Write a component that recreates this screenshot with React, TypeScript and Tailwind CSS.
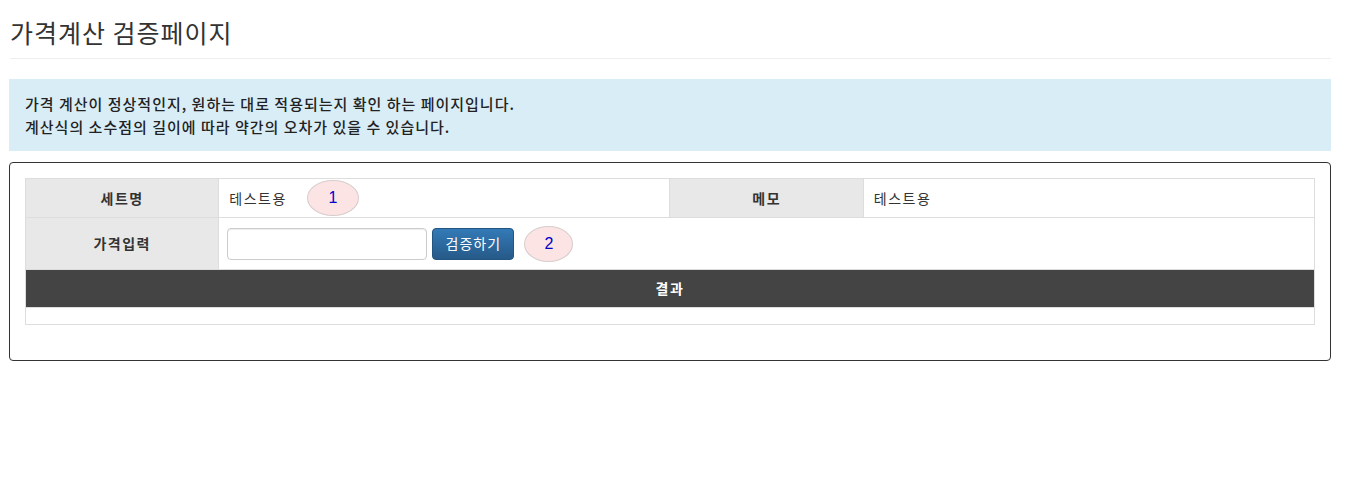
import React from 'react';

const Mark: React.FC<{ n: string; className?: string }> = ({ n, className }) => (
    <span
        className={
            'flex items-center justify-center h-[36px] -my-[10px] rounded-[50%] bg-[#fde4e4] border border-[#d6cccc] text-[#0000cc] text-[16px] tracking-normal font-["Liberation_Sans",Arial,sans-serif] ' +
            (className ?? '')
        }
    >
        {n}
    </span>
);

export default function App() {
    return (
        <div className="pl-[9px] pr-[15px] bg-white text-[#333] text-[14px] font-['Noto_Sans_CJK_KR','Noto_Sans',sans-serif]">
            <div className="pt-[17px] pb-[10px] border-b border-[#eee] ml-[1px]">
                <h1 className="text-[25px] leading-[31px] font-normal tracking-[1px]">가격계산 검증페이지</h1>
            </div>

            <div className="mt-[20px] bg-[#d9edf7] pl-[16px] pr-4 pt-[13px] pb-[13px] text-[15px] leading-[23px] font-medium tracking-[1px] text-[#222]">
                <div>가격 계산이 정상적인지, 원하는 대로 적용되는지 확인 하는 페이지입니다.</div>
                <div>계산식의 소수점의 길이에 따라 약간의 오차가 있을 수 있습니다.</div>
            </div>

            <div className="mt-[11px] border border-[#333] rounded-[4px] px-[15px] pt-[15px] pb-[35px]">
                <table className="w-full table-fixed border-collapse border border-[#ddd] tracking-[1.5px]">
                    <colgroup>
                        <col className="w-[15%]" />
                        <col className="w-[35%]" />
                        <col className="w-[15%]" />
                        <col className="w-[35%]" />
                    </colgroup>
                    <tbody>
                        <tr className="h-[39px]">
                            <th className="border border-[#ddd] bg-[#e8e8e8] font-bold text-center">세트명</th>
                            <td className="border border-[#ddd] px-[10px]">
                                <div className="flex items-center">
                                    <span>테스트용</span>
                                    <Mark n="1" className="ml-[20px] w-[52px]" />
                                </div>
                            </td>
                            <th className="border border-[#ddd] bg-[#e8e8e8] font-bold text-center">메모</th>
                            <td className="border border-[#ddd] px-[10px]">테스트용</td>
                        </tr>
                        <tr className="h-[52px]">
                            <th className="border border-[#ddd] bg-[#e8e8e8] font-bold text-center">가격입력</th>
                            <td colSpan={3} className="border border-[#ddd] px-[8px]">
                                <div className="flex items-center">
                                    <input
                                        type="text"
                                        className="w-[200px] h-[32px] border border-[#ccc] rounded-[4px] bg-white px-3 shadow-[inset_0_1px_1px_rgba(0,0,0,0.075)]"
                                    />
                                    <button className="ml-[5px] w-[82px] h-[32px] rounded-[4px] border border-[#245580] bg-gradient-to-b from-[#337ab7] to-[#265a88] text-white text-[14px] tracking-[1px]">
                                        검증하기
                                    </button>
                                    <Mark n="2" className="ml-[10px] w-[49px]" />
                                </div>
                            </td>
                        </tr>
                        <tr className="h-[38px]">
                            <th colSpan={4} className="bg-[#444] text-white font-bold text-center border border-[#ddd]">
                                결과
                            </th>
                        </tr>
                        <tr className="h-[17px]">
                            <td colSpan={4} className="border border-[#ddd]"></td>
                        </tr>
                    </tbody>
                </table>
            </div>
        </div>
    );
}
